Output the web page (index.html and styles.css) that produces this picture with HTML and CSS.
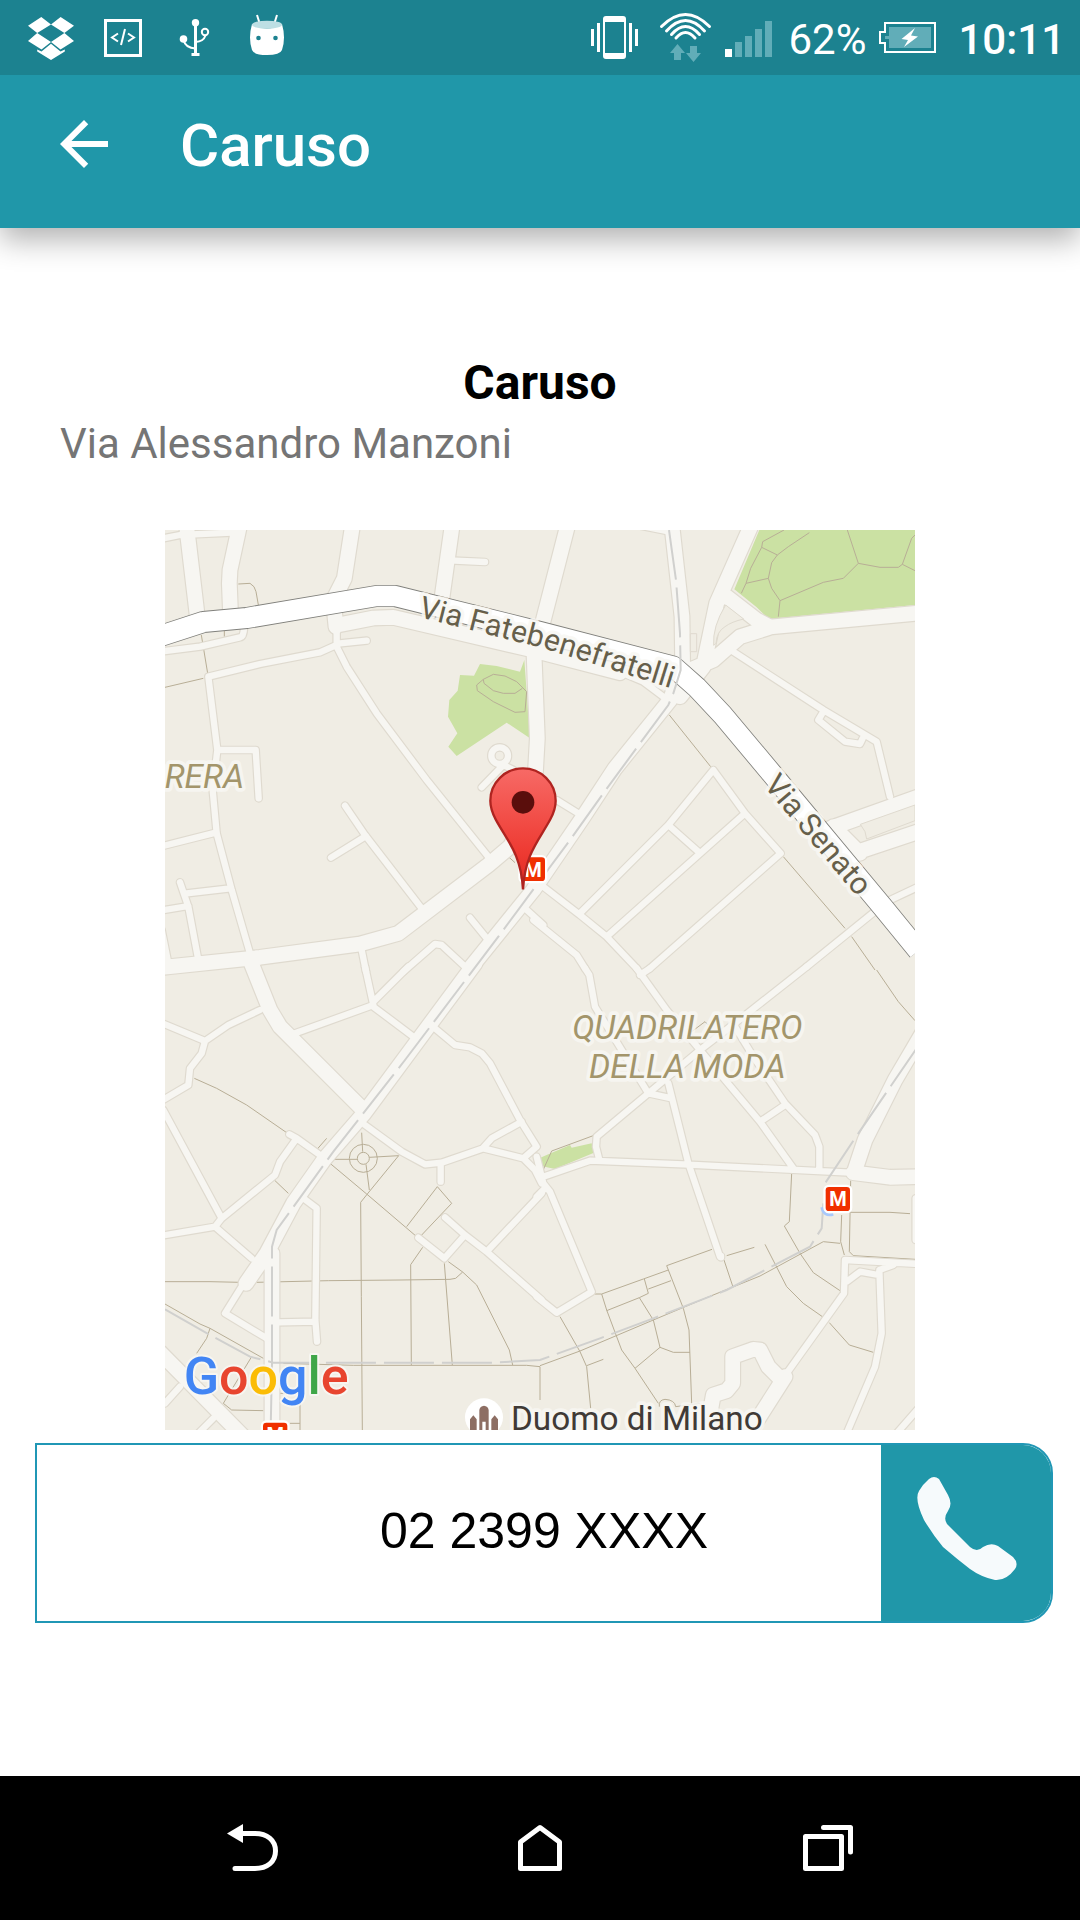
FILE: index.html
```html
<!DOCTYPE html>
<html lang="it">
<head>
<meta charset="utf-8">
<meta name="viewport" content="width=device-width, initial-scale=1">
<title>Caruso</title>
<link rel="stylesheet" href="styles.css">
</head>
<body>
<div class="status-bar">
  <div class="status-left">
    <svg class="notice" viewBox="15 0 72 75" aria-hidden="true">
      <path fill="#fff" d="M28 25.700 41.300 17 51 24.500 37.200 33zM51 24.500 60.600 17 74 25.700 64.400 33zM37.200 33 28 41 41.500 49.500 51 42zM64.400 33 74 41 60.500 49.500 51 42zM37.200 49.500 41.500 51.500 51 43.700 60.500 51.500 64.800 49.500 64.800 51.500 51 60 37.200 51.500z"/>
    </svg>
    <svg class="notice" viewBox="87 0 72 75" aria-hidden="true">
      <path fill="none" stroke="#fff" stroke-width="3" d="M105.500 20.500h35v35h-35z"/>
      <path fill="none" stroke="#fff" stroke-width="2" d="M118 33.500l-6 4 6 4M125 29l-4 16M128 33.500l6 4-6 4"/>
    </svg>
    <svg class="notice" viewBox="159 0 72 75" aria-hidden="true">
      <g fill="none" stroke="#fff"><path stroke-width="3" d="M195.500 22v33"/><path stroke-width="2" d="M183.500 40q2 8 12 8.500M205.500 35.500q-2 6-10 6.500"/><circle cx="205" cy="32" r="3.200" stroke-width="2"/></g>
      <path fill="#fff" d="M191.500 53h8v3h-8z"/><circle cx="195.500" cy="22.700" r="3.700" fill="#fff"/><circle cx="183.500" cy="39" r="3.800" fill="#fff"/>
    </svg>
    <svg class="notice" viewBox="231 0 72 75" aria-hidden="true">
      <path fill="none" stroke="#fff" stroke-width="2" d="M257 15l2.500 8M277 15l-2.500 8"/>
      <path fill="#fff" d="M252 24Q267 33 282 24 286 38 282 50 280 55 267 55 254 55 252 50 248 38 252 24z"/>
      <ellipse cx="267" cy="24.700" rx="15" ry="4" fill="#bddfe4"/>
      <circle cx="258.500" cy="38" r="2.300" fill="#1c8290"/><circle cx="275.500" cy="38" r="2.300" fill="#1c8290"/>
    </svg>
  </div>
  <div class="status-right">
    <svg width="60" height="75" viewBox="586 0 60 75" aria-hidden="true">
      <path fill="#fff" fill-rule="evenodd" d="M605 16h17q3 0 3 3v37q0 3-3 3h-17q-3 0-3-3v-37q0-3 3-3zM604 22v31h19v-31z"/>
      <path fill="#fff" d="M590 29h3v17h-3zM596 23h3v29h-3zM628 23h3v29h-3zM634 29h3v17h-3z"/>
    </svg>
    <svg width="54" height="75" viewBox="658 0 54 75" aria-hidden="true">
      <path fill="none" stroke="#fff" stroke-width="3" stroke-linecap="round" d="M660.500 26.500Q684.500 2.500 708.500 26.500M665.500 31Q684.500 10 703.500 31M670.500 34.500Q684.500 18.500 698.500 34.500M675 38Q684.500 27 694 38"/>
      <path fill="#61adb8" d="M676.500 44l7.500 9h-4v7h-7v-7h-4zM692.500 62l7.500-9h-4v-7h-7v7h-4z"/>
    </svg>
    <svg width="51" height="75" viewBox="724 0 51 75" aria-hidden="true">
      <path fill="#fff" d="M724 49h7v8h-7z"/>
      <path fill="#61adb8" d="M734 42h7v15h-7zM744 36h7v21h-7zM754 29h7v28h-7zM764 21h7v36h-7z"/>
    </svg>
    <span class="charge">62%</span>
    <svg width="66" height="75" viewBox="878 0 66 75" aria-hidden="true">
      <path fill="none" stroke="#fff" stroke-width="2" d="M885 23h50v29h-50v-9h-5v-11h5z"/>
      <path fill="#61adb8" d="M889 27h42v21h-42v-9h-4v-3h4z"/>
      <path fill="#fff" d="M915 28 901.500 39 908 40 904 47 918 36.500 911 35.500z"/>
    </svg>
    <time class="clock">10:11</time>
  </div>
</div>

<header class="app-bar">
  <button class="back" type="button" aria-label="Back">
    <svg width="72" height="72" viewBox="0 0 24 24" aria-hidden="true"><path fill="#fff" d="M20 11H7.830l5.590-5.590L12 4l-8 8 8 8 1.410-1.410L7.830 13H20z"/></svg>
  </button>
  <h1 class="app-title">Caruso</h1>
</header>

<main class="place">
  <h2 class="place-name">Caruso</h2>
  <p class="place-address">Via Alessandro Manzoni</p>

  <svg class="map" viewBox="0 0 2250 2700" role="img" aria-label="Map around Via Alessandro Manzoni">
    <defs>
      <linearGradient id="pin" x1="0" y1="0" x2="0" y2="1"><stop offset="0" stop-color="#f76a66"/><stop offset="0.700" stop-color="#ee3a32"/><stop offset="1" stop-color="#e02a22"/></linearGradient>
      <path id="fate" d="M758 260L1125 352 1600 500"/>
      <path id="senato" d="M1794 766L2150 1187"/>
      <g id="roads">
        <g transform="translate(-15 -30)">
          <path class="road wide" d="M80 20L112 290M238 20L210 150 208 190 212 290M577 20L553 175 520 240 528 320M876 20L845 240M528 316L640 294 700 292 1110 388 1380 458M1122 400L1132 655 1125 780 1080 930 1050 980 985 1035 715 1240 600 1272 300 1312 30 1340 0 1343"/>
          <path class="road" d="M0 57L60 45 215 38M885 122L975 126M0 395L120 380 240 352Q252 350 252 320M620 362L540 370 480 397 300 432 145 470 172 690 158 810 170 940 215 1110 270 1300M172 690H287L296 835M0 980L170 937M60 1087L85 1160 115 1320M80 1120L210 1105M0 1172L85 1158M5 1230L25 1330M530 340V380L560 440 650 580 800 780 985 1010M555 857L615 945 785 1165M513 1013L618 948M1030 735L965 802M1030 735L1060 750M930 1193L980 1255M730 1355L825 1272 845 1275 915 1340M605 1290L618 1355M1095 1165L1150 1215"/>
          <circle class="road" cx="1019" cy="707" r="25"/>
        </g>
        <g transform="translate(1125 -30)">
          <path class="road wide" d="M82 20L5 320M396 20L426 290 428 440 390 540 225 745 130 890 -20 1110 -210 1345M632 20L530 250 490 440 420 530M560 230L650 300 690 321 1140 279M690 322L600 350 520 420 450 450M870 925L1150 825M940 1000L1150 930M880 920L960 1000"/>
          <path class="road" d="M305 18L385 34M575 392L850 570 1010 665 1050 830M850 575L835 600 915 665 960 672 968 655M520 750L385 915 120 1180M520 750L615 880 722 1000 330 1345M615 880L200 1250M385 915L475 995M10 1100L120 1185 200 1250 290 1345M-20 1200L110 1305 135 1345M1140 1098L1040 1145M1000 1178L800 1340M115 880L50 840M250 460L310 485 370 530"/>
        </g>
        <g transform="translate(-15 1320)">
          <path class="road wide" d="M270 -30L330 120 360 170 610 420M945 -20L612 430 495 565 400 700 320 850 258 940M336 850V1400M0 1147L250 1400"/>
          <path class="road" d="M0 157L135 213 205 165 300 120M135 213L125 250 90 295 85 345 0 395M10 420L185 745 345 615 360 575 410 505M388 493L410 505 480 555M0 798L165 770 185 745M165 770L275 865M745 -10L640 95M615 -10L640 105 405 190M640 110L760 200M825 175L885 225 930 232 965 250 990 280 1080 450 1130 530 1090 565 970 535 845 578 795 583 725 545 615 465M1085 455L995 505 968 535M1090 565L1125 600 1145 640M842 585V635M430 685L470 715 466 1050 471 1115M358 1057L466 1055M245 950L195 1030 320 1105M855 742L915 795 980 845 1145 990M980 845L1145 670M775 803L853 865 915 795M15 1300L60 1250M110 1395L160 1345"/>
        </g>
        <g transform="translate(1125 1320)">
          <path class="road wide" d="M1150 185L1065 330 975 510 945 600M940 608L1050 622 1140 620M735 1220L620 1400M720 1225L685 1190 660 1140 640 1138 578 1160V1240L560 1262 520 1275 510 1330"/>
          <path class="road" d="M135 -5L148 15 165 110 325 370 395 385M290 -5L380 120 480 240 660 455 760 595M300 15L330 -5M800 -10L610 140 480 240 325 370 170 500 168 530 178 570M585 170L640 260 735 400 825 495 838 530V600M735 405L665 452M385 340L445 580 540 860M543 858v4M5 622L150 572 430 583 930 608M-10 560L10 640 30 665 155 965 50 1028 -10 980M-10 680L15 655M915 870L1140 882M915 870L912 970 740 1210M920 935L960 905 1015 915M1060 885L1018 900 1025 1090 1005 1190 920 1390M1140 1310L1070 1390M1127 685V810"/>
        </g>
      </g>
    </defs>

    <rect width="2250" height="2700" fill="#f0ede4"/>

    <g class="park">
      <path d="M1783 0L1708 178 1775 232 1811 267 2250 225V0z"/>
      <path d="M945 402L995 408 1065 425 1078 390 1095 625 1025 578 875 678 850 650 877 610 849 560 853 510 878 482 885 435 927 437z"/>
      <path d="M1110 1890L1215 1845 1220 1853 1280 1840 1287 1868 1170 1917 1115 1905z"/>
    </g>

    <g class="footpath">
      <path transform="translate(-15 -30)" d="M235 192L270 190Q285 198 288 215L296 260M15 502L130 475M124 345L143 460M193 330V350M1045 1010L1065 1028M950 495L970 478 1000 463 1035 468 1070 485 1100 515 1095 575 1065 577 1000 545 952 512zM970 478L972 490 1000 512 1030 520H1065L1087 505"/>
      <path transform="translate(1125 -30)" d="M388 585L512 740M730 1010L915 1225M935 1250L1005 1350M732 30L668 65 665 82 712 105M808 38L745 80 712 105 695 128 685 175 695 205 720 242 715 290M665 82L632 145 618 190 604 220M618 190L685 175M720 242L850 187 910 175 955 130 922 30M955 130L1020 142H1075L1087 133 1125 152M1087 133L1115 55 1125 45"/>
      <g transform="translate(-15 1320)">
        <path d="M103 325L170 355 260 405 380 488M472 537L500 505M343 630L385 670M15 935H150L240 937M290 937L505 932 720 930 870 928 887 925 908 906 865 875M908 906L950 945 1048 1140 1058 1185M853 880L877 1185M788 832L752 884 754 1185M510 580L620 672 770 800M605 488L608 545M522 568H592M628 562L716 557 622 672 602 697 604 980 607 1380M618 583L628 660M832 650L875 700 785 795M832 650L740 770M15 1002L120 1062 150 1075 310 1165M150 1075L140 1105 110 1150M275 1160L190 1300 215 1320 310 1322M370 1180L580 1186H1100L1140 1190V1290M420 1186V1380M390 1360H420M360 1270H400"/>
        <circle cx="610" cy="565" r="42"/><circle cx="610" cy="565" r="18"/>
      </g>
      <path transform="translate(1125 1320)" d="M5 610L35 543 165 495M60 1040L120 1145 140 1190 152 1315M140 1187L190 1168M0 1187L120 1143 340 1050 500 983 660 918 850 815 900 820M165 972H185L200 1020 245 1140 285 1195 355 1300M185 972L310 927 385 900M200 1022L298 983 325 970 313 927M325 957L393 932M298 983L340 1050 360 1132 400 1147H450M360 1132L285 1195M516 838L380 887 430 1015 447 1080 455 1300M552 870L578 948M560 857L643 832M755 610L748 755 733 768 780 850 820 908 900 962M675 823L740 950 790 1000 850 1042M868 1058L928 1125 1000 1147M905 735L902 815 913 855M932 632L928 845 940 857 1125 868M932 727H1050L1110 731M1010 0L1075 95 1125 152M415 215L495 155 505 165M358 1310Q355 1290 375 1288 405 1290 407 1310L480 1300"/>
    </g>

    <use href="#roads" class="edge"/>
    <use href="#roads" class="surface"/>

    <g class="island">
      <path d="M1682 225L1736 267Q1700 275 1680 290 1655 305 1653 340L1646 346Q1642 290 1682 225z"/>
      <path d="M1576 311h19v54h-19z"/>
      <path d="M2086 883L2250 825V872L2105 927 2100 905z"/>
    </g>

    <path class="avenue-edge" d="M-20 320L115 276 245 264 635 198H690L1125 306 1525 410 1595 472 1673 555 1828 740 2155 1133 2260 1262"/>
    <path class="avenue" d="M-20 320L115 276 245 264 635 198H690L1125 306 1525 410 1595 472 1673 555 1828 740 2155 1133 2260 1262"/>

    <g class="tram">
      <path d="M1512 0L1533 150 1545 310 1547 420 1525 490 1510 525 1425 640 1315 790 1215 930 1000 1220 720 1590 505 1865 335 2100 321 2150V2500L317 2700"/>
      <path d="M0 2338L135 2415 255 2480 325 2498H985L1125 2490 1305 2425 1465 2365 1685 2280 1935 2150 1970 2095 1975 2020M1982 1957L2065 1832 2255 1555"/>
    </g>
    <path d="M1970 2032Q1975 2060 2005 2053" fill="none" stroke="#a9c9fb" stroke-width="8"/>

    <g class="metro">
      <rect x="1067" y="982" width="73" height="71" rx="10"/><text x="1104" y="1040">M</text>
      <rect x="1982" y="1971" width="73" height="72" rx="10"/><text x="2019" y="2029">M</text>
      <rect x="294" y="2678" width="73" height="72" rx="10"/><text x="331" y="2736">M</text>
    </g>

    <path fill="url(#pin)" stroke="#af2420" stroke-width="7" transform="translate(-15 -30)" d="M1089 1108C1083 1000 1040 960 1007 898 995 875 991 860 991 842A98 97 0 0 1 1187 842C1187 860 1183 875 1171 898 1138 960 1095 1000 1089 1108z"/>
    <circle cx="1074" cy="817" r="34" fill="#5a0e0c"/>

    <circle cx="957" cy="2662" r="57" fill="#fff"/>
    <path fill="#8d6e63" d="M943 2700V2640Q945 2628 957 2627 969 2628 971 2640V2700H962V2675H952V2700zM915 2700V2668L925 2656 935 2668V2700zM979 2700V2668L989 2656 999 2668V2700z"/>

    <text class="label street"><textPath href="#fate">Via Fatebenefratelli</textPath></text>
    <text class="label street"><textPath href="#senato">Via Senato</textPath></text>
    <text class="label district" x="237" y="773" text-anchor="end">BRERA</text>
    <text class="label district" text-anchor="middle"><tspan x="1567" y="1528">QUADRILATERO</tspan><tspan x="1567" y="1645">DELLA MODA</tspan></text>
    <text class="label landmark" x="1038" y="2700">Duomo di Milano</text>
    <text class="label brand" x="56" y="2592"><tspan fill="#4285f4">G</tspan><tspan fill="#e8452f">o</tspan><tspan fill="#fbbc05">o</tspan><tspan fill="#4285f4">g</tspan><tspan fill="#3fa648">l</tspan><tspan fill="#e8452f">e</tspan></text>
  </svg>

  <a class="call" href="tel:022399">
    <span class="call-number">02 2399 XXXX</span>
    <span class="call-action">
      <svg width="170" height="176" viewBox="0 2 170 176" aria-hidden="true"><path fill="#f6fafc" d="M48 36Q53 32 58 36L67 52Q72 61 67 68 62 75 66 81L89 104Q96 110 102 104 110 99 117 103L132 114Q138 120 134 126 125 138 114 137 100 134 89 126 76 116 62 104 52 92 43 77 33 56 38 48 42 41 48 36z"/></svg>
    </span>
  </a>
</main>

<nav class="nav-bar" aria-label="System">
  <button type="button" aria-label="Back">
    <svg width="52" height="48" viewBox="0 0 52 48" aria-hidden="true"><path fill="#fff" d="M1 9.500 17 0V19z"/><path fill="none" stroke="#fff" stroke-width="5" stroke-linecap="round" d="M15 9.500H29C41 9.500 49.500 16 49.500 27S41 44.500 29 44.500H9"/></svg>
  </button>
  <button type="button" aria-label="Home">
    <svg width="44" height="48" viewBox="0 0 44 48" aria-hidden="true"><path fill="none" stroke="#fff" stroke-width="5" stroke-linejoin="round" d="M2.500 18 22 3.500 41.500 18V44.500H2.500z"/></svg>
  </button>
  <button type="button" aria-label="Recent apps">
    <svg width="50" height="48" viewBox="0 0 50 48" aria-hidden="true"><path fill="none" stroke="#fff" stroke-width="5" stroke-linejoin="round" stroke-linecap="round" d="M2.500 12.500H38.500V44.500H2.500zM20.500 3.500H47.500V28"/></svg>
  </button>
</nav>
</body>
</html>
```

FILE: styles.css
```css
* {
  box-sizing: border-box;
}

body {
  margin: 0;
  min-height: 100vh;
  display: flex;
  flex-direction: column;
  background: #fff;
  color: #000;
  font-family: Roboto, "Liberation Sans", sans-serif;
}

svg {
  display: block;
}

button {
  padding: 0;
  border: 0;
  background: none;
}

/* Status bar */
.status-bar {
  position: relative;
  z-index: 1;
  display: flex;
  justify-content: space-between;
  height: 75px;
  padding: 0 15px;
  background: #1c8290;
  color: #fff;
  font-size: 42px;
  line-height: 80px;
}

.status-left,
.status-right {
  display: flex;
}

.status-right {
  gap: 12px;
}

.notice {
  width: 72px;
  height: 75px;
}

.clock {
  margin-left: 2px;
  font-weight: 500;
}

/* App bar */
.app-bar {
  position: relative;
  display: flex;
  align-items: center;
  gap: 60px;
  height: 153px;
  padding: 0 48px 15px;
  background: #2097a9;
  box-shadow: 0 12px 28px rgba(0, 0, 0, 0.3);
  color: #fff;
}

.app-title {
  margin: 4px 0 0;
  font-size: 60px;
  font-weight: 500;
  line-height: 72px;
}

/* Place details */
.place {
  flex: 1;
  display: flex;
  flex-direction: column;
  padding: 127px 0 40px;
}

.place-name {
  margin: 0 0 8px;
  font-size: 48px;
  font-weight: 700;
  line-height: 56px;
  text-align: center;
}

.place-address {
  margin: 0 60px;
  color: #757575;
  font-size: 42px;
  line-height: 50px;
}

.map {
  width: 100%;
  max-width: 750px;
  margin: 61px auto 13px;
}

/* Map drawing, in units of a third of a pixel */
.park {
  fill: #cbe1a3;
}

.footpath {
  fill: none;
  stroke: #b8ae96;
  stroke-width: 3px;
}

.edge {
  --edge: 7px;
  stroke: #dfdacf;
}

.surface {
  --edge: 0px;
  stroke: #f7f6f2;
}

.road {
  fill: none;
  stroke-width: calc(19px + var(--edge));
  stroke-linecap: round;
  stroke-linejoin: round;
}

.road.wide {
  stroke-width: calc(44px + var(--edge));
}

.island {
  fill: #f0ede4;
  stroke: #dfdacf;
  stroke-width: 3px;
}

.avenue-edge,
.avenue {
  fill: none;
  stroke: #80807c;
  stroke-width: 66px;
  stroke-linejoin: round;
}

.avenue {
  stroke: #fff;
  stroke-width: 61px;
}

.tram {
  fill: none;
  stroke: #d0d0ce;
  stroke-width: 6px;
  stroke-dasharray: 150px 24px;
}

.metro {
  fill: #f03000;
  stroke: #fff;
  stroke-width: 14px;
  paint-order: stroke;
}

.metro text {
  fill: #fff;
  stroke: none;
  font-size: 60px;
  font-weight: 700;
  text-anchor: middle;
}

.label {
  stroke: rgba(248, 247, 243, 0.85);
  stroke-width: 22px;
  stroke-linejoin: round;
  paint-order: stroke;
}

.street {
  fill: #665f4b;
  font-size: 92px;
}

.district {
  fill: #a3956b;
  font-size: 100px;
  font-style: italic;
}

.landmark {
  fill: #403a36;
  font-size: 100px;
}

.brand {
  stroke-width: 12px;
  font-size: 156px;
  font-weight: 500;
}

/* Call button */
.call {
  display: grid;
  grid-template-columns: 1fr 170px;
  height: 180px;
  margin: 0 27px 0 35px;
  border: 2px solid #2097b5;
  border-radius: 0 30px 30px 0;
  overflow: hidden;
  color: #000;
  text-decoration: none;
}

.call-number {
  grid-area: 1 / 1 / 2 / 3;
  align-self: center;
  padding-bottom: 4px;
  font-family: "Liberation Sans", sans-serif;
  font-size: 50px;
  line-height: 60px;
  text-align: center;
}

.call-action {
  grid-area: 1 / 2 / 2 / 3;
  background: #2097a9;
}

/* System navigation */
.nav-bar {
  display: grid;
  grid-template-columns: repeat(3, 1fr);
  height: 144px;
  padding: 0 10%;
  background: #000;
}

.nav-bar button {
  display: grid;
  place-items: center;
}
```
